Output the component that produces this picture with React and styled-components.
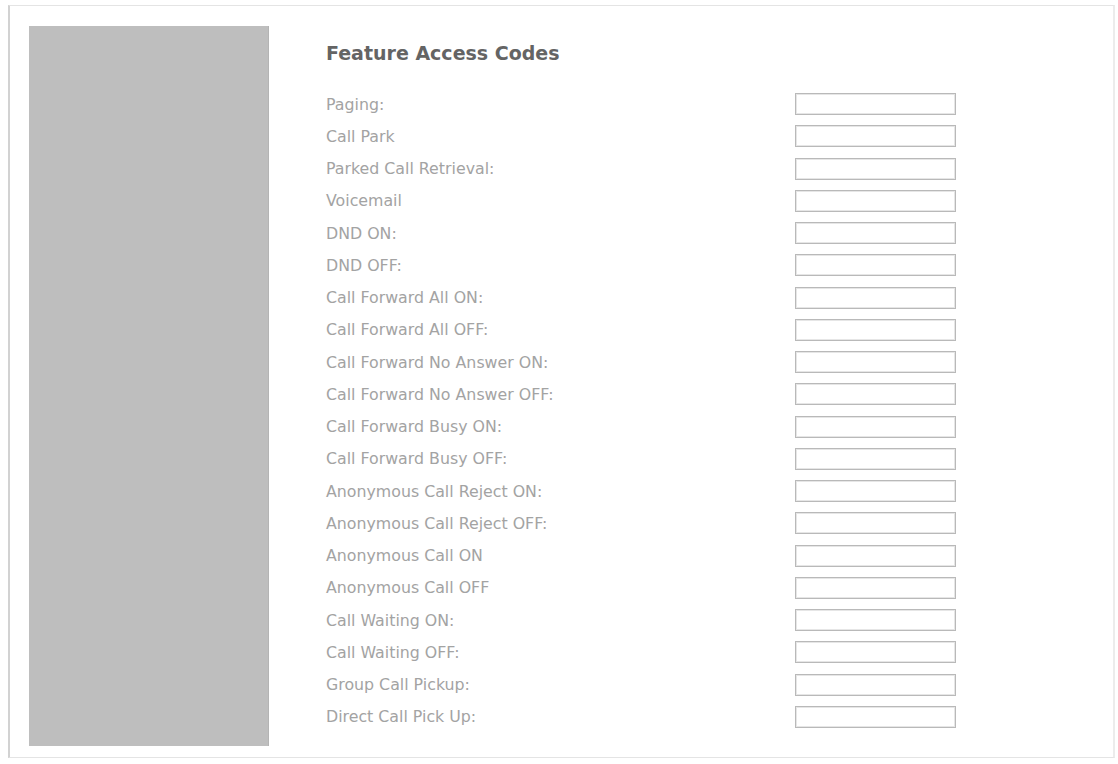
import React from 'react'
import styled, { createGlobalStyle } from 'styled-components'

const GlobalStyle = createGlobalStyle`
  body {
    margin: 0;
    background: #ffffff;
    font-family: "DejaVu Sans", Verdana, sans-serif;
  }
`

const Frame = styled.div`
  box-sizing: border-box;
  margin: 5px 0 0 8px;
  width: 1107px;
  height: 753px;
  border: 1px solid #e4e4e4;
  border-left: 2px solid #d2d2d2;
  border-right: 2px solid #ececec;
  padding: 20px 0 11px 19px;
  display: flex;
  background: #fff;
`

const Sidebar = styled.div`
  width: 240px;
  flex-shrink: 0;
  background: #bebebe;
  border-right: 1px solid #b4b4b4;
  box-sizing: border-box;
`

const Content = styled.div`
  padding: 16px 0 0 57px;
  display: flex;
  flex-direction: column;
`

const Title = styled.h2`
  margin: 0 0 24px;
  font-size: 19px;
  line-height: 22px;
  font-weight: bold;
  color: #646464;
`

const Form = styled.div`
  display: grid;
  grid-template-columns: 469px 161px;
  grid-auto-rows: 32.25px;
  align-items: center;
`

const Label = styled.label`
  font-size: 15.8px;
  color: #a3a3a3;
  white-space: nowrap;
`

const CodeInput = styled.input`
  box-sizing: border-box;
  width: 161px;
  height: 22px;
  margin: 0;
  padding: 0 4px;
  border: 1px solid #b9b9b9;
  box-shadow: inset 0 0 0 1px #e6e6e6;
  background: #fff;
  outline: none;
`

const codes = [
  'Paging:',
  'Call Park',
  'Parked Call Retrieval:',
  'Voicemail',
  'DND ON:',
  'DND OFF:',
  'Call Forward All ON:',
  'Call Forward All OFF:',
  'Call Forward No Answer ON:',
  'Call Forward No Answer OFF:',
  'Call Forward Busy ON:',
  'Call Forward Busy OFF:',
  'Anonymous Call Reject ON:',
  'Anonymous Call Reject OFF:',
  'Anonymous Call ON',
  'Anonymous Call OFF',
  'Call Waiting ON:',
  'Call Waiting OFF:',
  'Group Call Pickup:',
  'Direct Call Pick Up:',
]

export default function App() {
  return (
    <>
      <GlobalStyle />
      <Frame>
        <Sidebar />
        <Content>
          <Title>Feature Access Codes</Title>
          <Form>
            {codes.map((name, i) => (
              <React.Fragment key={name}>
                <Label htmlFor={'fac' + i}>{name}</Label>
                <CodeInput id={'fac' + i} type="text" />
              </React.Fragment>
            ))}
          </Form>
        </Content>
      </Frame>
    </>
  )
}
